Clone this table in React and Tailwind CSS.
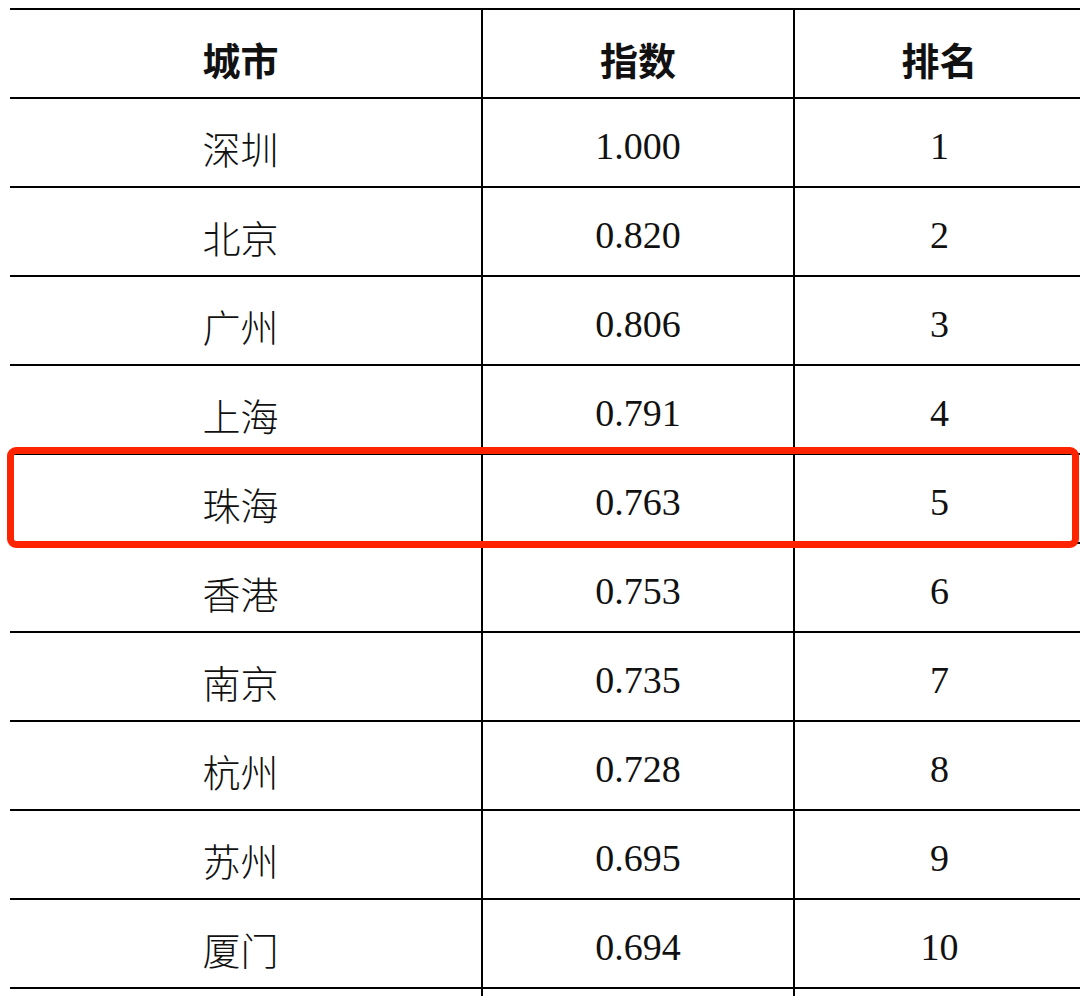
import React from "react";

const rows = [
  ["深圳", "1.000", "1"],
  ["北京", "0.820", "2"],
  ["广州", "0.806", "3"],
  ["上海", "0.791", "4"],
  ["珠海", "0.763", "5"],
  ["香港", "0.753", "6"],
  ["南京", "0.735", "7"],
  ["杭州", "0.728", "8"],
  ["苏州", "0.695", "9"],
  ["厦门", "0.694", "10"],
  ["", "", ""],
];

const cjk = { fontFamily: '"Noto Sans CJK SC", "Liberation Serif", serif' };
const num = { fontFamily: '"Liberation Serif", "Noto Sans CJK SC", serif' };

function Row({ a, b, c, header }) {
  const w = header ? "font-semibold" : "font-light";
  return (
    <div className="grid grid-cols-[471px_312px_1fr] h-[89px] border-b-2 border-[#000]">
      <div
        className={`flex items-center justify-center pr-[10px] pt-[10px] text-[38px] leading-none text-[#111] ${w}`}
        style={cjk}
      >
        {a}
      </div>
      <div
        className={`flex items-center justify-center border-l-2 border-[#000] text-[38px] leading-none text-[#111] ${
          header ? "pt-[10px] font-semibold" : "pt-[6px] font-normal"
        }`}
        style={header ? cjk : num}
      >
        {b}
      </div>
      <div
        className={`flex items-center justify-center border-l-2 border-[#000] pl-[4px] text-[38px] leading-none text-[#111] ${
          header ? "pt-[10px] font-semibold" : "pt-[6px] font-normal"
        }`}
        style={header ? cjk : num}
      >
        {c}
      </div>
    </div>
  );
}

export default function App() {
  return (
    <div className="relative w-[1080px] h-[996px] overflow-hidden bg-white">
      <div className="pt-[8px] pl-[10px]">
        <div className="border-t-2 border-[#000]">
          <Row a="城市" b="指数" c="排名" header />
          {rows.map((r, i) => (
            <Row key={i} a={r[0]} b={r[1]} c={r[2]} />
          ))}
        </div>
      </div>
      <div className="absolute left-[7px] top-[447px] w-[1072px] h-[101px] border-[7px] border-[#ff2400] rounded-[9px] pointer-events-none" />
    </div>
  );
}
